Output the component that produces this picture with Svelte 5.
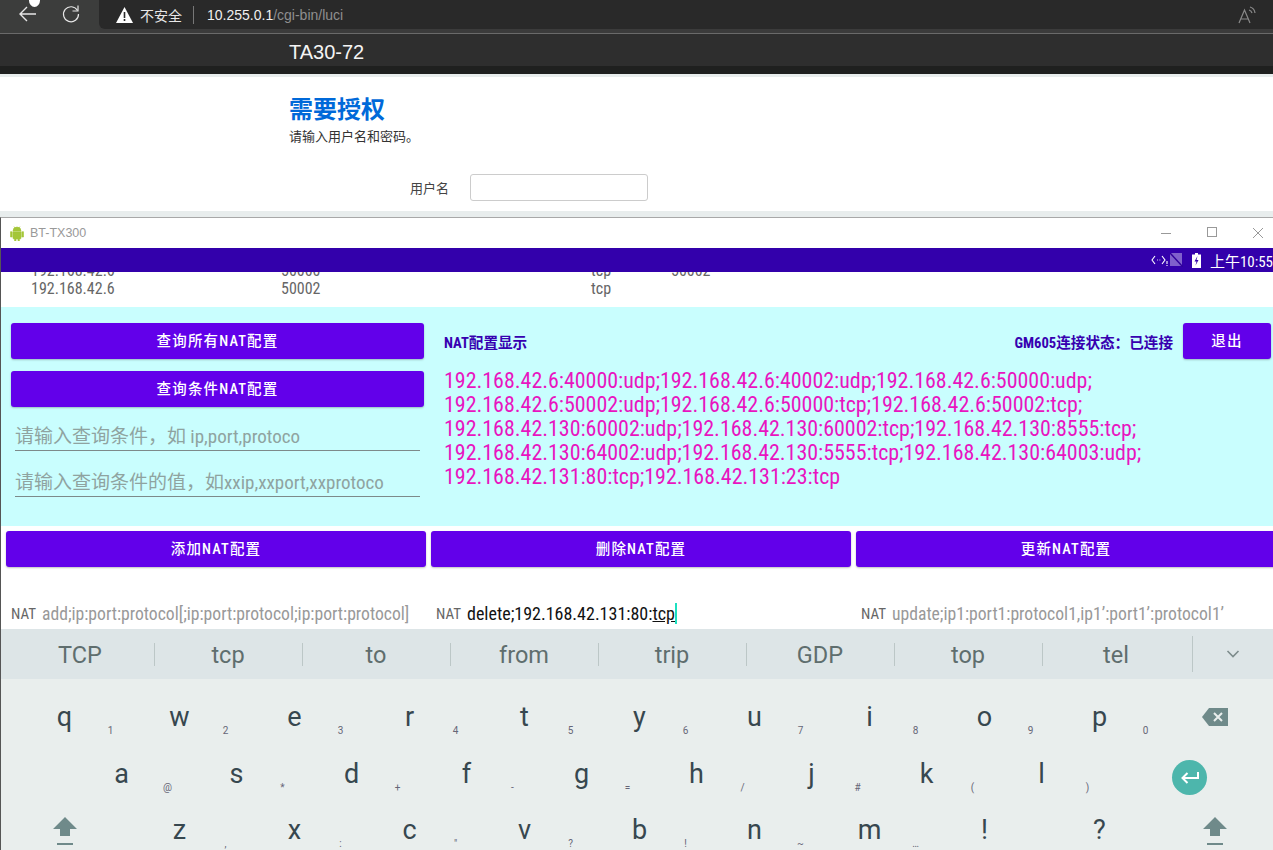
<script lang="ts">
  const row1 = [['q','1'],['w','2'],['e','3'],['r','4'],['t','5'],['y','6'],['u','7'],['i','8'],['o','9'],['p','0']];
  const row2 = [['a','@'],['s','*'],['d','+'],['f','-'],['g','='],['h','/'],['j','#'],['k','('],['l',')']];
  const row3 = [['z',','],['x',':'],['c','"'],['v','?'],['b','!'],['n','~'],['m','…'],['!',''],['?','']];
  const suggestions = ['TCP','tcp','to','from','trip','GDP','top','tel'];
  const natLines = [
    '192.168.42.6:40000:udp;192.168.42.6:40002:udp;192.168.42.6:50000:udp;',
    '192.168.42.6:50002:udp;192.168.42.6:50000:tcp;192.168.42.6:50002:tcp;',
    '192.168.42.130:60002:udp;192.168.42.130:60002:tcp;192.168.42.130:8555:tcp;',
    '192.168.42.130:64002:udp;192.168.42.130:5555:tcp;192.168.42.130:64003:udp;',
    '192.168.42.131:80:tcp;192.168.42.131:23:tcp'
  ];
</script>

{#snippet shift()}
  <svg class="shift" width="26" height="30" viewBox="0 0 26 30">
    <path d="M13 1 L25 13 H18 V20 H8 V13 H1 Z" fill="#6f8a8a"/>
    <rect x="5" y="27" width="16" height="2" fill="#6f8a8a"/>
  </svg>
{/snippet}

<div class="page">
  <div class="toolbar">
    <div class="nav">
      <svg width="20" height="20" viewBox="0 0 20 20" fill="none" stroke="#e6e6e6" stroke-width="1.4"><path d="M18 10H2M9 3 2 10l7 7"/></svg>
      <svg width="20" height="20" viewBox="0 0 20 20" fill="none" stroke="#e6e6e6" stroke-width="1.2"><path d="M16.500 6.500A7.500 7.500 0 1 0 17.500 10"/><path d="M17 1.500v5.500h-5.500"/></svg>
    </div>
    <div class="address">
      <svg width="17" height="16" viewBox="0 0 17 16"><path d="M8.5 0 17 16H0Z" fill="#fff"/><rect x="7.7" y="5" width="1.6" height="6" fill="#2a2a2a"/><rect x="7.7" y="12" width="1.6" height="2" fill="#2a2a2a"/></svg>
      <span class="insecure">不安全</span>
      <span class="addr-sep"></span>
      <span class="url"><b>10.255.0.1</b>/cgi-bin/luci</span>
      <svg class="read" width="20" height="20" viewBox="0 0 20 20" fill="none" stroke="#8a8a8a" stroke-width="1.2"><path d="M2 18 7.5 5 13 18M4 14h7"/><path d="M12 5a4 4 0 0 1 3 3M13 2a7 7 0 0 1 5 6"/></svg>
    </div>
  </div>
  <div class="luci-head"><span>TA30-72</span></div>
  <div class="luci-body">
    <h2>需要授权</h2>
    <p>请输入用户名和密码。</p>
    <div class="login-row"><label for="user">用户名</label><input id="user" /></div>
  </div>

  <div class="window">
    <div class="titlebar">
      <svg width="14" height="15" viewBox="0 0 14 15" fill="#a4c639"><path d="M3 5a4 4 0 0 1 8 0ZM3 5.7h8v6.3a1 1 0 0 1-1 1H9.4v2H8v-2H6v2H4.600v-2H4a1 1 0 0 1-1-1ZM0.500 5.700h1.700v5.300H.5ZM11.800 5.700h1.700v5.300h-1.700ZM4 .5l1 1.500M10 .5 9 2" stroke="#a4c639" stroke-width=".6"/></svg>
      <span class="win-title">BT-TX300</span>
      <div class="win-controls">
        <svg width="12" height="12" viewBox="0 0 12 12" stroke="#999" fill="none"><path d="M1 6.500h10"/></svg>
        <svg width="12" height="12" viewBox="0 0 12 12" stroke="#999" fill="none"><rect x="1.500" y=".5" width="9" height="9"/></svg>
        <svg width="12" height="12" viewBox="0 0 12 12" stroke="#999" fill="none"><path d="M1 1l10 10M11 1 1 11"/></svg>
      </div>
    </div>
    <div class="statusbar">
      <svg width="17" height="12" viewBox="0 0 17 12" fill="none" stroke="#fff" stroke-width="1.100"><path d="M4 2 1 6l3 4M11 2l3 4-3 4"/><path d="M6 6h.8M8.500 6h.8" /><path d="M16 7v3M16 11v1"/></svg>
      <svg width="13" height="14" viewBox="0 0 13 14"><path d="M0 0h12v13H0Z" fill="#8060cc"/><path d="M0 0l13 14" stroke="#30009a" stroke-width="1.500"/></svg>
      <svg class="batt" width="9" height="15" viewBox="0 0 9 15"><path d="M3 0h3v1.500h3V15H0V1.500h3Z" fill="#fff"/><path d="M5.500 3 2.500 8.500H4.500L3.500 12.500l3-5.500H4.500Z" fill="#3300ab"/></svg>
      <span class="clock">上午10:55</span>
    </div>

    <div class="table">
      <div class="t-row clipped"><span class="c1">192.168.42.6</span><span class="c2">50000</span><span class="c3">tcp</span><span>50002</span></div>
      <div class="t-row"><span class="c1">192.168.42.6</span><span class="c2">50002</span><span class="c3">tcp</span></div>
    </div>

    <section class="panel">
      <div class="query">
        <button>查询所有NAT配置</button>
        <button>查询条件NAT配置</button>
        <div class="field first">请输入查询条件，如 ip,port,protoco</div>
        <div class="field">请输入查询条件的值，如xxip,xxport,xxprotoco</div>
      </div>
      <div class="result">
        <div class="result-head">
          <span class="strong">NAT配置显示</span>
          <span class="strong conn">GM605连接状态：已连接</span>
          <button class="quit">退出</button>
        </div>
        <div class="nat-text">
          {#each natLines as line}<div>{line}</div>{/each}
        </div>
      </div>
    </section>

    <div class="actions">
      <button>添加NAT配置</button>
      <button>删除NAT配置</button>
      <button>更新NAT配置</button>
    </div>

    <div class="inputs">
      <div class="nat-input"><span class="nat">NAT</span><span class="ph">add;ip:port:protocol[;ip:port:protocol;ip:port:protocol]</span></div>
      <div class="nat-input"><span class="nat">NAT</span><span class="val">delete;192.168.42.131:80:<u>tcp</u></span><i class="caret"></i></div>
      <div class="nat-input"><span class="nat">NAT</span><span class="ph">update;ip1:port1:protocol1,ip1’:port1’:protocol1’</span></div>
    </div>

    <div class="suggest">
      {#each suggestions as s}<div class="sug">{s}</div>{/each}
      <div class="more">
        <svg width="14" height="8" viewBox="0 0 14 8" fill="none" stroke="#7d8c8c" stroke-width="1.600"><path d="M1.500 1 7 6.500 12.500 1"/></svg>
      </div>
    </div>

    <div class="keyboard">
      <div class="keys">
        {#each row1 as [k, h]}<div class="key">{k}<small>{h}</small></div>{/each}
        <div class="key">
          <svg width="26" height="18" viewBox="0 0 26 18"><path d="M7 0h19v18H7L0 9Z" fill="#6f8a8a"/><path d="M12 5l8 8M20 5l-8 8" stroke="#e9eeed" stroke-width="2"/></svg>
        </div>
      </div>
      <div class="keys second">
        {#each row2 as [k, h]}<div class="key">{k}<small>{h}</small></div>{/each}
        <div class="key enter-key">
          <span class="enter"><svg width="20" height="14" viewBox="0 0 20 14" fill="none" stroke="#fff" stroke-width="2"><path d="M18 1v6H3M7.500 2 2.500 7l5 5"/></svg></span>
        </div>
      </div>
      <div class="keys">
        <div class="key">{@render shift()}</div>
        {#each row3 as [k, h]}<div class="key">{k}<small>{h}</small></div>{/each}
        <div class="key">{@render shift()}</div>
      </div>
    </div>
  </div>
  <span class="pointer"></span>
</div>

<style>
  :global(body) {
    margin: 0;
    overflow: hidden;
    background: #fff;
  }

  .page {
    position: relative;
    width: 1273px;
    height: 850px;
    overflow: hidden;
    font-family: "Liberation Sans", "Noto Sans CJK SC", sans-serif;
  }

  .pointer {
    position: absolute;
    left: 29px;
    top: -6px;
    width: 11px;
    height: 13px;
    border-radius: 50%;
    background: #fff;
  }

  /* browser chrome */
  .toolbar {
    display: flex;
    height: 33px;
    background: #3b3b3b;
    border-bottom: 1px solid #6a6a6a;
  }

  .nav {
    width: 99px;
    display: flex;
    align-items: center;
    gap: 23px;
    padding: 0 0 5px 18px;
    box-sizing: border-box;
    background: #3c3d3c;
  }

  .address {
    flex: 1;
    height: 29px;
    padding-left: 17px;
    background: #292929;
    border-bottom-left-radius: 6px;
    display: flex;
    align-items: center;
    color: #e8e8e8;
  }

  .insecure {
    margin-left: 7px;
    font-size: 14px;
  }

  .addr-sep {
    width: 1px;
    height: 18px;
    margin: 0 13px 0 11px;
    background: #777;
  }

  .url {
    font-size: 14px;
    color: #8f8f8f;
  }

  .url b {
    font-weight: 400;
    color: #f0f0f0;
  }

  .read {
    margin-left: auto;
    margin-right: 16px;
  }

  .luci-head {
    height: 32px;
    padding-left: 289px;
    line-height: 36px;
    background: #2e2e2e;
    border-bottom: 8px solid #1f201f;
    color: #f4f4f4;
    font-size: 20px;
  }

  .luci-body {
    height: 134px;
    padding-left: 290px;
    border-top: 3px solid #e8eded;
    border-bottom: 6px solid #e8eded;
  }

  .luci-body h2 {
    margin: 19px 0 0 -1px;
    font-size: 24px;
    line-height: 28px;
    color: #0069d9;
  }

  .luci-body p {
    margin: 5px 0 0 -1px;
    font-size: 13px;
    line-height: 16px;
    color: #333;
  }

  .login-row {
    display: flex;
    align-items: center;
    margin: 29px 0 0 120px;
    font-size: 13px;
    color: #444;
  }

  .login-row input {
    width: 178px;
    height: 27px;
    margin-left: 21px;
    padding: 0;
    box-sizing: border-box;
    border: 1px solid #ccc;
    border-radius: 3px;
  }

  /* emulator window */
  .window {
    border-top: 1px solid #a8a8a8;
    border-left: 1px solid #555;
    font-family: Roboto, "Noto Sans CJK SC", sans-serif;
    font-stretch: 87%;
  }

  .titlebar {
    height: 30px;
    display: flex;
    align-items: center;
    padding-left: 9px;
    background: #fff;
    font-family: "Liberation Sans", sans-serif;
  }

  .win-title {
    margin-left: 6px;
    font-size: 12.500px;
    color: #999;
  }

  .win-controls {
    margin-left: auto;
    display: flex;
    gap: 34px;
    padding-right: 9px;
  }

  .statusbar {
    height: 24px;
    display: flex;
    align-items: center;
    justify-content: flex-end;
    background: #3300ab;
    color: #fff;
  }

  .statusbar svg + svg {
    margin-left: 2px;
  }

  .statusbar .batt {
    margin-left: 9px;
  }

  .clock {
    margin-left: 9px;
    font-size: 15px;
    white-space: nowrap;
  }

  .table {
    height: 35px;
    overflow: hidden;
    font-size: 16px;
    color: #666;
  }

  .t-row {
    display: flex;
    height: 18px;
    line-height: 18px;
    padding-left: 30px;
  }

  .t-row.clipped {
    margin-top: -10px;
  }

  .c1 { width: 250px; }
  .c2 { width: 310px; }
  .c3 { width: 80px; }

  button {
    display: block;
    border: 0;
    height: 36px;
    padding: 0 0 4px;
    border-radius: 3px;
    background: #6200ea;
    color: #fff;
    font: inherit;
    font-size: 14.500px;
    font-weight: 500;
    letter-spacing: .08em;
    box-shadow: 0 1px 2px rgba(0, 0, 0, .25);
  }

  .panel {
    display: flex;
    height: 219px;
    background: #c9fefe;
  }

  .query {
    width: 413px;
    margin-left: 10px;
    padding-top: 16px;
  }

  .query button {
    width: 100%;
    margin-bottom: 12px;
  }

  .field {
    margin: 0 4px;
    height: 31px;
    line-height: 36px;
    border-bottom: 1px solid #7d8a8a;
    font-size: 19px;
    color: #8fa3a0;
    white-space: nowrap;
  }

  .field.first {
    margin-bottom: 14px;
  }

  .result {
    flex: 1;
    padding: 16px 2px 0 20px;
  }

  .result-head {
    display: flex;
    align-items: center;
    height: 36px;
  }

  .strong {
    font-size: 14.600px;
    font-weight: 700;
    color: #3700b0;
  }

  .conn {
    margin-left: auto;
    margin-right: 10px;
  }

  .quit {
    width: 88px;
  }

  .nat-text {
    margin-top: 10px;
    font-size: 21.950px;
    line-height: 24px;
    color: #e815c0;
    white-space: nowrap;
  }

  .actions {
    display: grid;
    grid-template-columns: repeat(3, 420px);
    column-gap: 5px;
    padding: 5px 0 0 5px;
  }

  .inputs {
    display: grid;
    grid-template-columns: repeat(3, 425px);
    height: 60px;
    padding-left: 10px;
    align-items: end;
    box-sizing: border-box;
    white-space: nowrap;
  }

  .nat-input {
    display: flex;
    align-items: center;
    height: 27px;
  }

  .nat {
    margin-right: 6px;
    font-size: 15px;
    color: #666;
  }

  .ph {
    font-size: 17.650px;
    color: #999;
  }

  .val {
    font-size: 18px;
    color: #111;
  }

  .caret {
    width: 1.500px;
    height: 21px;
    background: #1de0c0;
  }

  .suggest {
    display: flex;
    height: 50px;
    margin-top: 2px;
    padding-left: 6px;
    background: #dde5e7;
    font-size: 23.500px;
    font-stretch: 92%;
    color: #5f6e6e;
  }

  .sug {
    position: relative;
    width: 148px;
    padding-right: 2px;
    box-sizing: border-box;
    text-align: center;
    line-height: 52px;
  }

  .sug:not(:nth-child(8))::after {
    content: "";
    position: absolute;
    right: 0;
    top: 14px;
    height: 23px;
    width: 1px;
    background: #bcc7c7;
  }

  .more {
    flex: 1;
    display: flex;
    align-items: center;
    justify-content: center;
    margin: 7px 0 7px 1px;
    border-left: 1px solid #bcc7c7;
  }

  .keyboard {
    height: 175px;
    padding: 10px 0 0 6px;
    background: #e9eeed;
    box-sizing: border-box;
  }

  .keys {
    display: grid;
    grid-template-columns: repeat(11, 115px);
    height: 56.500px;
    font-size: 27px;
    font-stretch: 95%;
    color: #37474f;
  }

  .keys.second {
    padding-left: 57px;
    grid-template-columns: repeat(9, 115px) 181px;
  }

  .key {
    position: relative;
    display: flex;
    align-items: center;
    justify-content: center;
  }

  .key small {
    position: absolute;
    left: calc(50% + 46px);
    top: 36px;
    font-size: 10px;
    transform: translateX(-50%);
    color: #667;
  }

  .enter {
    display: flex;
    align-items: center;
    justify-content: center;
    width: 35px;
    height: 35px;
    margin-top: 8px;
    border-radius: 50%;
    background: #4db6ac;
  }

  .shift {
    margin-top: 1px;
  }
</style>
